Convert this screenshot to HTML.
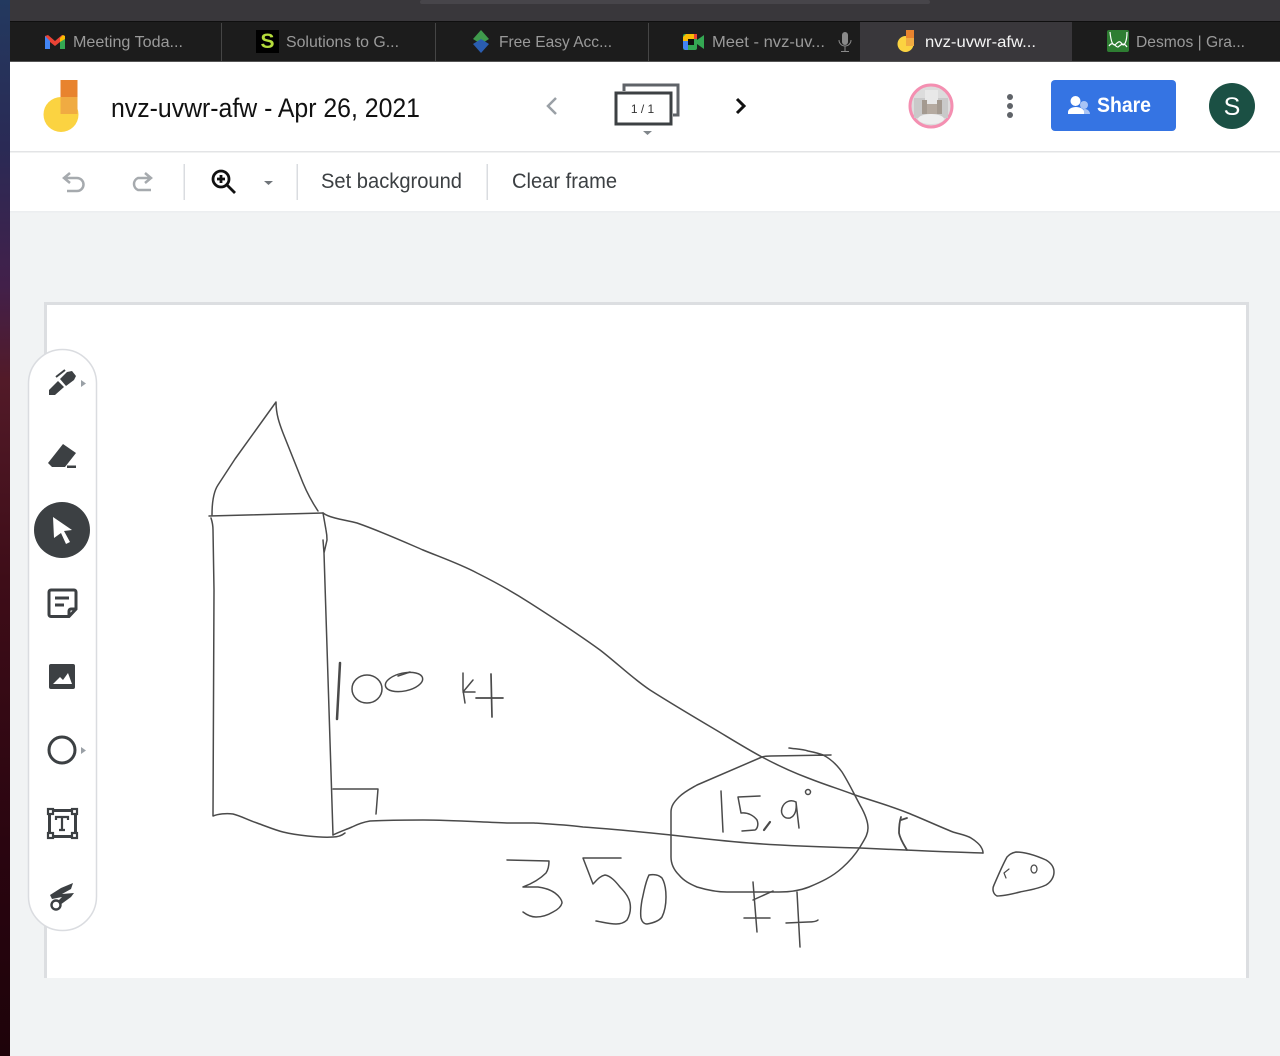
<!DOCTYPE html>
<html><head><meta charset="utf-8"><title>nvz-uvwr-afw</title>
<style>
html,body{margin:0;padding:0;background:#f1f3f4;width:1280px;height:1056px;overflow:hidden}
svg{display:block;position:absolute;left:0;top:0;filter:blur(0.35px)}
text{font-family:"Liberation Sans",sans-serif}
.t{font-size:16px;fill:#9a9a9a}
.d{fill:none;stroke:#4a4a4a;stroke-width:1.500;stroke-linejoin:round;stroke-linecap:round}
.i{fill:none;stroke:#3c4043;stroke-width:3}
</style></head><body>
<svg width="1280" height="1056" viewBox="0 0 1280 1056" xmlns="http://www.w3.org/2000/svg">
<defs>
<linearGradient id="s" x1="0" y1="0" x2="0" y2="1">
<stop offset="0" stop-color="#23395f"/><stop offset=".14" stop-color="#2a2a55"/><stop offset=".27" stop-color="#42204a"/><stop offset=".36" stop-color="#521a28"/><stop offset=".55" stop-color="#3e0d18"/><stop offset=".8" stop-color="#2a0510"/><stop offset="1" stop-color="#1e030a"/>
</linearGradient>
</defs>
<rect width="1280" height="1056" fill="#f1f3f4"/>
<rect width="10" height="1056" fill="url(#s)"/>
<!-- browser chrome -->
<rect x="10" width="1270" height="22" fill="#39373b"/>
<rect x="420" width="510" height="4" rx="2" fill="#47454a"/>
<rect x="10" y="21" width="1270" height="1" fill="#0f0f0f"/>
<rect x="10" y="22" width="1270" height="40" fill="#1c1c1c"/>
<rect x="860" y="22" width="212" height="40" fill="#39373b"/>
<g fill="#454545"><rect x="221" y="23" width="1" height="38"/><rect x="435" y="23" width="1" height="38"/><rect x="648" y="23" width="1" height="38"/></g>
<rect x="10" y="61" width="1270" height="1" fill="#555"/>
<!-- gmail -->
<path d="M45 49V36l3-1 7 6 7-6 3 1v13h-5V42l-5 4-5-4v7z" fill="#ea4335"/>
<path d="M45 36v13h5V41z" fill="#4285f4"/><path d="M65 36v13h-5V41z" fill="#34a853"/><path d="M60 38l3-3 2 1v3l-5 3z" fill="#fbbc04"/>
<text class="t" x="73" y="47" textLength="110" lengthAdjust="spacingAndGlyphs">Meeting Toda...</text>
<!-- S -->
<rect x="256" y="30" width="23" height="23" fill="#000"/>
<text x="267.500" y="48" font-size="21" font-weight="bold" text-anchor="middle" fill="#b5dc3c">S</text>
<text class="t" x="286" y="47" textLength="113" lengthAdjust="spacingAndGlyphs">Solutions to G...</text>
<!-- Free easy -->
<path d="M481 30l8 9-8 5-8-5z" fill="#3f9a4c"/><path d="M473 44l8-5 8 5-8 9z" fill="#2a5db0"/>
<text class="t" x="499" y="47" textLength="113" lengthAdjust="spacingAndGlyphs">Free Easy Acc...</text>
<!-- meet -->
<rect x="683" y="34" width="14" height="16" rx="2" fill="#34a853"/><path d="M683 42v-5l3-3h11v5h-9v3z" fill="#fbbc04"/><path d="M683 41h5v9h-3l-2-2z" fill="#4285f4"/><path d="M697 34v5h-3v-5z" fill="#ea4335"/><rect x="688" y="39" width="6" height="6" fill="#111"/><path d="M697 40l7-5v14l-7-5z" fill="#34a853"/>
<text class="t" x="712" y="47" textLength="113" lengthAdjust="spacingAndGlyphs">Meet - nvz-uv...</text>
<rect x="842" y="32" width="6" height="13" rx="3" fill="#8a8a8a"/><path d="M839 40a6 6 0 0 0 12 0M845 46v5M841 51.500h8" fill="none" stroke="#8a8a8a" stroke-width="1"/>
<!-- jam tab -->
<circle cx="905.500" cy="44" r="8" fill="#fbd341"/><rect x="906" y="30" width="8" height="8" fill="#e8832e"/><rect x="906" y="38" width="8" height="8" fill="#f0ab42"/>
<text x="925" y="47" font-size="16" fill="#f5f5f5" textLength="111" lengthAdjust="spacingAndGlyphs">nvz-uvwr-afw...</text>
<!-- desmos -->
<rect x="1107" y="30" width="22" height="22" rx="2" fill="#2e7d32"/><path d="M1110 32c1 10 3 15 6 12s4-3 6 0 5-2 5-12M1109 46c4-6 7 2 9 1s5-6 9 0" fill="none" stroke="#fff" stroke-width="1.200"/>
<text class="t" x="1136" y="47" textLength="109" lengthAdjust="spacingAndGlyphs">Desmos | Gra...</text>
<!-- header -->
<rect x="10" y="62" width="1270" height="150" fill="#fff"/>
<rect x="10" y="151" width="1270" height="1.500" fill="#e3e4e6"/>
<rect x="10" y="211" width="1270" height="1.500" fill="#eceef0"/>
<circle cx="61" cy="114.500" r="17.500" fill="#fbd341"/>
<rect x="60.500" y="80" width="17" height="17" fill="#e8832e"/><rect x="60.500" y="97" width="17" height="17" fill="#f0ab42"/>
<text x="111" y="117" font-size="27" fill="#111" textLength="309" lengthAdjust="spacingAndGlyphs">nvz-uvwr-afw - Apr 26, 2021</text>
<path d="M556 98l-8 8 8 8" fill="none" stroke="#9aa0a6" stroke-width="2.500"/>
<path d="M737 99l7 7-7 7" fill="none" stroke="#111" stroke-width="3"/>
<path d="M624 91v-6h54v30h-5" fill="none" stroke="#5f6368" stroke-width="3"/>
<rect x="616" y="93" width="55" height="31" fill="#fff" stroke="#3c4043" stroke-width="3"/>
<text x="642.500" y="113" font-size="12" text-anchor="middle" fill="#333">1 / 1</text>
<path d="M643 131h9l-4.500 4z" fill="#80868b"/>
<!-- avatar -->
<circle cx="931" cy="106" r="21" fill="#dcdcdc" stroke="#f48fb1" stroke-width="3"/>
<rect x="914" y="98" width="34" height="20" fill="#c9c9c9"/><rect x="925" y="90" width="13" height="14" fill="#e8e8e8"/>
<path d="M922 100h5v14h-5zM937 100h5v14h-5z" fill="#a49a90"/><path d="M927 104h10v10h-10z" fill="#b5aaa0"/><ellipse cx="931" cy="119" rx="13" ry="5" fill="#eee"/>
<g fill="#5f6368"><circle cx="1010" cy="97" r="3"/><circle cx="1010" cy="106" r="3"/><circle cx="1010" cy="115" r="3"/></g>
<rect x="1051" y="80" width="125" height="51" rx="4" fill="#3574e3"/>
<circle cx="1084" cy="105" r="4" fill="#a9c4f5"/><path d="M1080 114c0-3 3-5 5-5s5 2 5 5z" fill="#a9c4f5"/>
<circle cx="1075.500" cy="101" r="5" fill="#fff"/><path d="M1068 114v-2c0-3 4-5 8-5s8 2 8 5v2z" fill="#fff"/>
<text x="1097" y="112" font-size="21" font-weight="bold" fill="#fff" textLength="54" lengthAdjust="spacingAndGlyphs">Share</text>
<circle cx="1232" cy="106" r="23" fill="#1b5044"/>
<text x="1232" y="115" font-size="25" text-anchor="middle" fill="#fff">S</text>
<!-- toolbar -->
<path d="M70 173l-6 5 6 5M65 178h12a6.500 6.500 0 0 1 0 13H67" fill="none" stroke="#a6aaae" stroke-width="2.500"/>
<path d="M145 173l6 5-6 5M150 178h-12a6.500 6.500 0 0 0 0 12h13" fill="none" stroke="#a6aaae" stroke-width="2.500"/>
<g fill="#dadce0"><rect x="183.500" y="164" width="1.500" height="36"/><rect x="296.500" y="164" width="1.500" height="36"/><rect x="486.500" y="164" width="1.500" height="36"/></g>
<circle cx="221" cy="179" r="8" fill="none" stroke="#111" stroke-width="2.800"/>
<path d="M227 185l8 8M217 179h8M221 175v8" fill="none" stroke="#111" stroke-width="2.800"/>
<path d="M264 181h9l-4.500 4z" fill="#70757a"/>
<text x="321" y="188" font-size="21" fill="#3c4043" textLength="141" lengthAdjust="spacingAndGlyphs">Set background</text>
<text x="512" y="188" font-size="21" fill="#3c4043" textLength="105" lengthAdjust="spacingAndGlyphs">Clear frame</text>
<!-- canvas -->
<rect x="44" y="302" width="1205" height="676" fill="#dcdee1"/>
<rect x="47" y="305" width="1199" height="673" fill="#fff"/>
<!-- drawing -->
<g class="d">
<path d="M212 515C212 500 214 491 218 485L235 459 276 402C276 415 280 425 283 433L303 483C308 495 314 505 318 511"/>
<path d="M209 516L323 513"/>
<path d="M211 518Q213 524 213 530L214 590 213 816C218 814 226 813 233 814C241 816 248 820 257 823C268 827 275 830 283 832C295 835 320 838 333 837Q340 837 345 833"/>
<path d="M323 513L326 530C327 535 327 538 327 540L324 553 323 540M324 553L333 835"/>
<path d="M323 513C327 516 331 517 335 518C342 520 350 521 357 523C380 531 400 540 423 550C440 557 460 564 477 573C495 582 513 592 530 603C555 619 578 634 600 650C617 663 632 678 650 690C672 704 694 717 716 730C731 739 747 749 762 757C777 765 792 772 808 778C823 784 839 789 855 795C873 801 891 806 908 813C923 819 938 826 953 832C959 834 966 835 971 838C976 841 980 845 981 847Q983 850 983 853"/>
<path d="M333 835C339 832 345 830 352 827C358 824 364 822 370 821C388 820 405 820 423 820C451 820 479 822 507 823C516 823 525 823 534 823C550 824 567 825 583 827C612 829 642 832 671 835C697 838 723 841 749 843C786 846 823 847 860 848C901 850 942 852 983 853"/>
<path d="M333 789L378 789 376 814"/>
<path d="M340 663L337 719" stroke-width="2.500"/>
<ellipse cx="367" cy="689" rx="15" ry="14"/>
<ellipse cx="404" cy="682" rx="19" ry="9" transform="rotate(-12 404 682)"/>
<path d="M398 676L410 672"/>
<path d="M463 673L463 690 465 703M463 692L473 680M463 692L475 692"/>
<path d="M476 698L503 698M491 674L492 717" stroke-width="1.700"/>
<path d="M831 755L771 756Q765 756 762 757L697 785C690 789 684 792 679 797C674 802 671 806 671 812L671 857C671 864 674 870 679 875C684 881 690 884 697 887C707 890 717 892 727 892L779 892C790 892 799 891 809 887C821 882 832 877 842 868C850 861 855 855 860 847C864 840 868 835 868 828C868 820 864 812 860 805C854 794 849 783 842 772C837 765 831 759 823 755C818 753 813 752 808 751C802 749 795 749 789 748"/>
<path d="M721 791L723 832"/>
<path d="M760 796L738 797 741 813C748 812 754 816 757 820C759 825 757 829 755 830L742 831"/>
<path d="M770 822L764 830" stroke-width="2.200"/>
<path d="M796 802C790 799 784 802 782 808C780 815 785 819 790 818C795 816 797 810 796 802L799 828"/>
<circle cx="808" cy="792" r="2.500"/>
<path d="M901 817C899 823 899 828 899 833C900 839 904 845 907 850M901 820L907 818" stroke-width="1.800"/>
<path d="M507 860L549 861C549 866 548 870 546 873C540 879 531 884 523 887L538 887C545 888 551 890 555 893C559 896 562 900 562 903C561 907 557 910 553 912C548 915 542 917 536 917C531 917 527 915 523 912"/>
<path d="M621 858L583 858 593 884C597 880 600 876 605 875C611 876 616 882 620 887C625 892 629 897 630 903C631 909 630 915 627 920C624 923 620 924 616 924C609 924 602 922 596 921"/>
<path d="M649 875C645 883 644 892 642 900C641 906 640 912 641 918C642 922 644 924 647 924C653 923 659 921 662 917C665 911 666 904 666 897C666 890 665 883 662 878C659 875 654 874 649 875"/>
<path d="M753 882L757 932M753 900L773 891M744 918L770 918"/>
<path d="M797 892L800 947M786 923L808 922Q816 922 818 920"/>
<path d="M1016 852C1011 853 1009 855 1007 857C1002 866 998 876 994 885C992 889 993 894 997 896C1004 896 1012 894 1020 892C1029 890 1038 889 1046 885C1051 882 1054 877 1054 872C1054 867 1051 863 1046 860C1037 856 1026 852 1016 852Z"/>
<path d="M1009 869L1004 873 1006 878" stroke-width="1.200"/>
<ellipse cx="1034" cy="869" rx="3" ry="4" stroke-width="1.300"/>
</g>
<!-- side toolbar -->
<rect x="28.500" y="349.500" width="68" height="581" rx="34" fill="#fff" stroke="#dadce0" stroke-width="1.500"/>
<g fill="#3c4043">
<path d="M49 390L58 381 64 387 55 395 49 395Z"/><path d="M60 379L67 372 72 371 76 376 74 380 66 386Z"/>
<path d="M56 377L65 370" stroke="#3c4043" stroke-width="2" fill="none"/>
<path d="M81 380l5 3.500-5 3.500z" fill="#9aa0a6"/>
<path d="M63 444L76 453 65 467 52 467 48 463Z"/><rect x="67" y="465.500" width="9" height="2.500"/>
<circle cx="62" cy="530" r="28"/>
<rect x="49" y="664" width="26" height="25" rx="2"/>
<path d="M81 747l5 3.500-5 3.500z" fill="#9aa0a6"/>
</g>
<path d="M53 517L72 530 64 531 70 542 66 544 61 533 54 538Z" fill="#fff"/>
<path d="M53 684L60 677 63 680 68 673 72 684Z" fill="#fff"/>
<path d="M69 616.500H51a2 2 0 0 1-2-2V592a2 2 0 0 1 2-2h23a2 2 0 0 1 2 2v17zM76 609h-5a2 2 0 0 0-2 2v5.500" class="i" stroke-width="2.600"/>
<path d="M55 598h14M55 605h9" class="i" stroke-width="2.200"/>
<circle cx="62" cy="750" r="13" class="i"/>
<rect x="49.500" y="810.500" width="26" height="26" class="i" stroke-width="2.400"/>
<g fill="#fff" stroke="#3c4043" stroke-width="2.200"><rect x="48" y="809" width="5" height="5"/><rect x="72" y="809" width="5" height="5"/><rect x="48" y="833" width="5" height="5"/><rect x="72" y="833" width="5" height="5"/></g>
<path d="M56 820v-3h12v3M62 817v13M59 830h6" fill="none" stroke="#3c4043" stroke-width="2.200"/>
<path d="M50 895L61 888 73 883 71 889 62 894 74 893 71 897 60 905 58 901 62 897 52 899Z" fill="#3c4043"/>
<circle cx="56" cy="905" r="4.500" fill="#fff" stroke="#3c4043" stroke-width="2.400"/>
</svg>
</body></html>
